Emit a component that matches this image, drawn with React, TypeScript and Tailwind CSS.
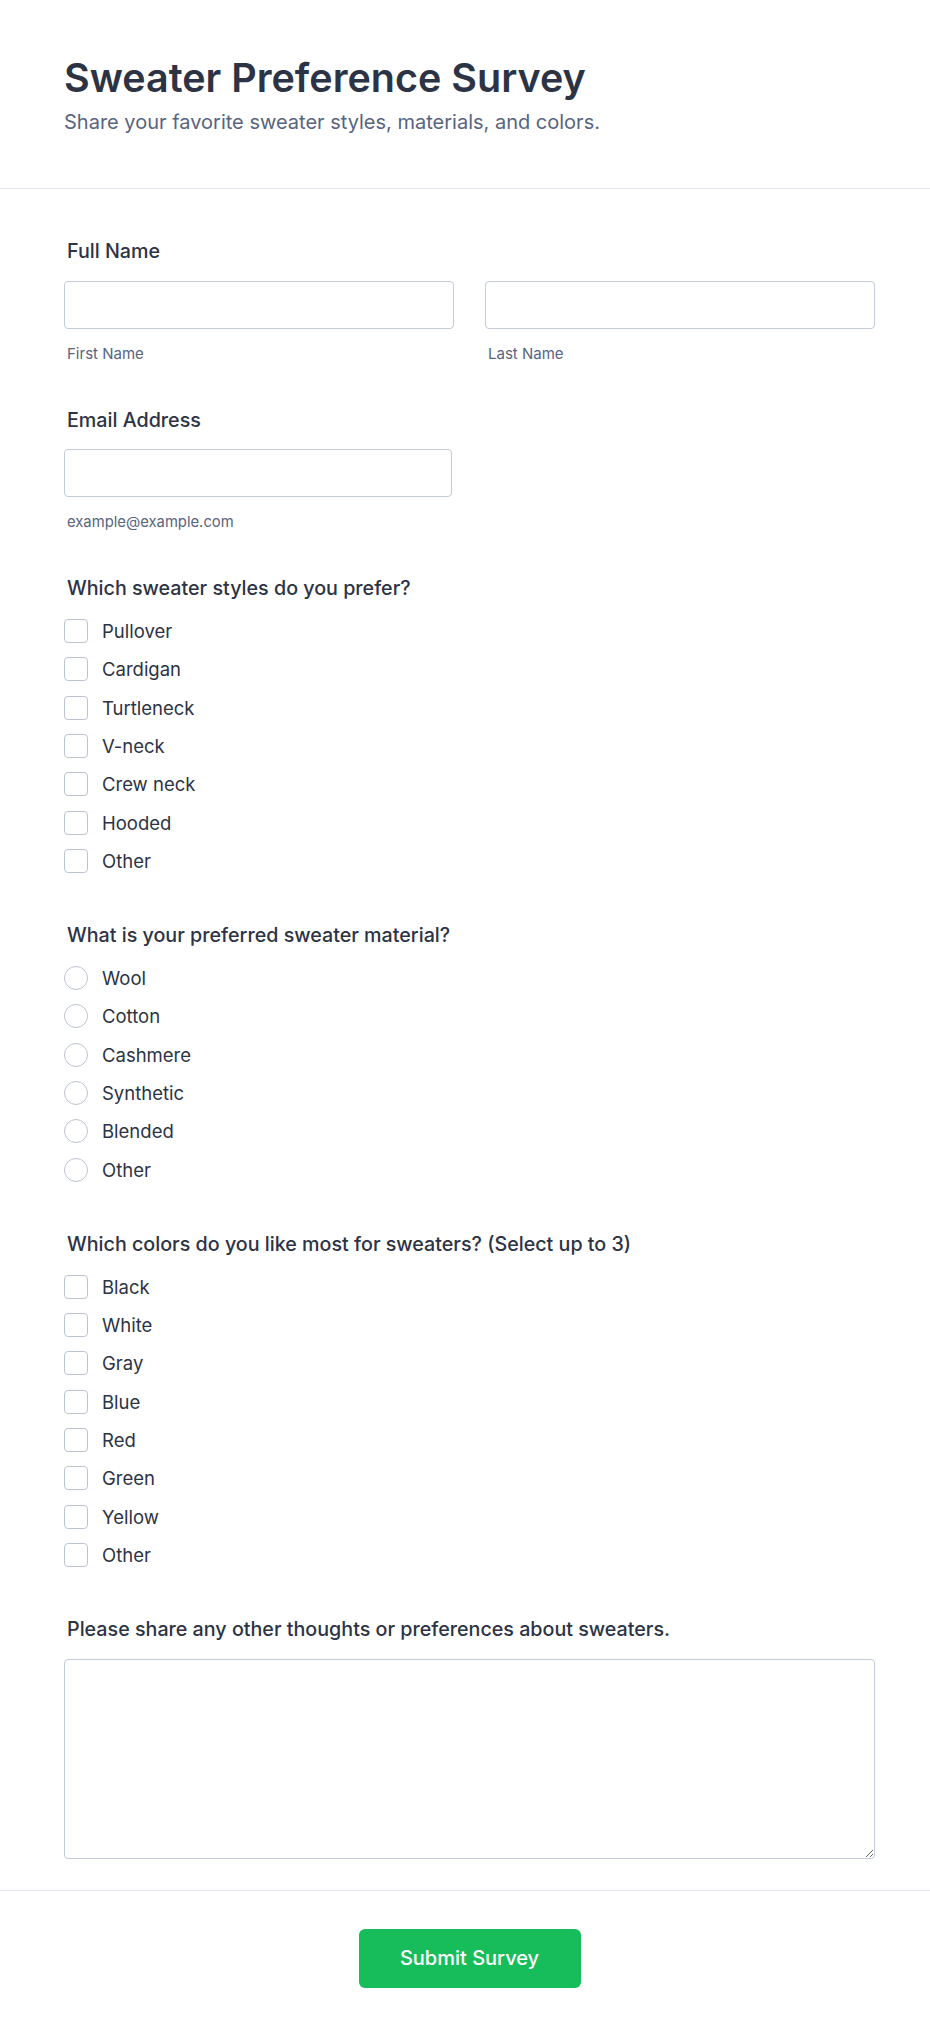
// Sweater preference survey form
const STYLES = ['Pullover', 'Cardigan', 'Turtleneck', 'V-neck', 'Crew neck', 'Hooded', 'Other'];
const MATERIALS = ['Wool', 'Cotton', 'Cashmere', 'Synthetic', 'Blended', 'Other'];
const COLORS = ['Black', 'White', 'Gray', 'Blue', 'Red', 'Green', 'Yellow', 'Other'];

function Question({ children }: { children: React.ReactNode }) {
  return <p className="ml-[3px] text-[19.7px] leading-7 font-medium text-[#2c3345]">{children}</p>;
}

function OptionList({ items, type, name }: { items: string[]; type: 'checkbox' | 'radio'; name: string }) {
  return (
    <div className="mt-[15px] flex flex-col gap-[10.33px]">
      {items.map((item) => (
        <label key={item} className="flex h-7 items-center gap-[14px] cursor-pointer">
          <input
            type={type}
            name={name}
            className={`m-0 h-6 w-6 shrink-0 appearance-none border border-[#bcc3d1] bg-white ${
              type === 'radio' ? 'rounded-full' : 'rounded-[4px]'
            }`}
          />
          <span className="text-[18.5px] leading-7 text-[#2c3345]">{item}</span>
        </label>
      ))}
    </div>
  );
}

export default function App() {
  return (
    <div className="min-h-screen bg-white font-['Inter',sans-serif] text-[#2c3345]">
      {/* header */}
      <div className="border-b border-[#e2e5ef] pl-16 pr-[55px] pt-[54px] pb-[52px]">
        <h1 className="text-[39.5px] leading-[48px] font-semibold tracking-normal text-[#2c3345]">
          Sweater Preference Survey
        </h1>
        <p className="mt-[6px] text-[20px] leading-7 text-[#57647e]">
          Share your favorite sweater styles, materials, and colors.
        </p>
      </div>

      {/* form */}
      <div className="pl-16 pr-[55px] pt-12 pb-[31px]">
        <div>
          <Question>Full Name</Question>
          <div className="mt-4 grid grid-cols-2 gap-x-[31px]">
            <div>
              <input className="h-12 w-full rounded-[4px] border border-[#c3cad8] bg-white px-3 outline-none" />
              <p className="ml-[3px] mt-[15px] text-[15px] leading-5 text-[#57647e]">First Name</p>
            </div>
            <div>
              <input className="h-12 w-full rounded-[4px] border border-[#c3cad8] bg-white px-3 outline-none" />
              <p className="ml-[3px] mt-[15px] text-[15px] leading-5 text-[#57647e]">Last Name</p>
            </div>
          </div>
        </div>

        <div className="mt-[42px]">
          <Question>Email Address</Question>
          <input
            type="email"
            className="mt-[15px] h-12 w-[388px] rounded-[4px] border border-[#c3cad8] bg-white px-3 outline-none"
          />
          <p className="ml-[3px] mt-[15px] text-[14.8px] leading-5 text-[#57647e]">example@example.com</p>
        </div>

        <div className="mt-[42px]">
          <Question>Which sweater styles do you prefer?</Question>
          <OptionList items={STYLES} type="checkbox" name="styles" />
        </div>

        <div className="mt-[46px]">
          <Question>What is your preferred sweater material?</Question>
          <OptionList items={MATERIALS} type="radio" name="material" />
        </div>

        <div className="mt-[46px]">
          <Question>Which colors do you like most for sweaters? (Select up to 3)</Question>
          <OptionList items={COLORS} type="checkbox" name="colors" />
        </div>

        <div className="mt-[46px]">
          <Question>Please share any other thoughts or preferences about sweaters.</Question>
          <textarea className="mt-4 block h-[200px] w-full rounded-[4px] border border-[#c3cad8] bg-white p-3 outline-none" />
        </div>
      </div>

      {/* footer */}
      <div className="flex justify-center border-t border-[#e2e5ef] pl-16 pr-[55px] pt-[38px] pb-[50px]">
        <button className="h-[59px] w-[222px] rounded-[6px] bg-[#18bd5b] text-[20px] font-medium text-white">
          Submit Survey
        </button>
      </div>
    </div>
  );
}
